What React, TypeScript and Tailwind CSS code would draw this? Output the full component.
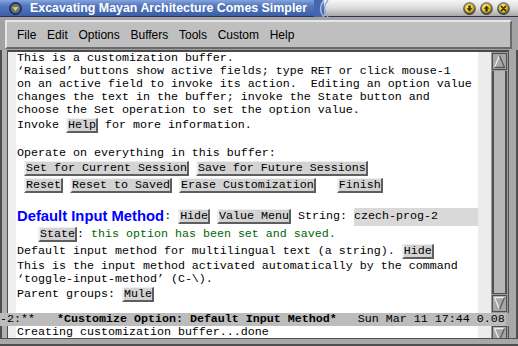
import React from "react";

const MONO = "font-['Liberation_Mono',monospace] text-[11.67px] text-black";

function Btn({ t }: { t: string }) {
  return (
    <span className="inline-flex h-[15px] items-center border-t border-r-2 border-b-2 border-l-2 border-t-[#eeeeee] border-l-[#eeeeee] border-r-[#5e5e5e] border-b-[#5e5e5e] bg-[#d3d3d3] leading-[12px]">
      {t}
    </span>
  );
}

function TitleBtn({ kind }: { kind: "down" | "up" | "close" }) {
  return (
    <svg width="13" height="13" viewBox="0 0 13 13">
      <defs>
        <radialGradient id={"g-" + kind} cx="0.4" cy="0.35" r="0.7">
          <stop offset="0" stopColor="#fff7a0" />
          <stop offset="0.6" stopColor="#e6c41c" />
          <stop offset="1" stopColor="#9c7c00" />
        </radialGradient>
        <linearGradient id={"r-" + kind} x1="0" y1="0" x2="0" y2="1">
          <stop offset="0" stopColor="#8a8a8a" />
          <stop offset="1" stopColor="#3c3c3c" />
        </linearGradient>
      </defs>
      <circle cx="6.5" cy="6.5" r="6.4" fill={"url(#r-" + kind + ")"} />
      <circle cx="6.5" cy="6.5" r="4.7" fill={"url(#g-" + kind + ")"} />
      {kind === "down" && (
        <path d="M5.3 3.6 H7.7 V6.2 H9.4 L6.5 9.4 L3.6 6.2 H5.3 Z" fill="#3b3200" />
      )}
      {kind === "up" && (
        <path d="M5.3 9.4 H7.7 V6.8 H9.4 L6.5 3.6 L3.6 6.8 H5.3 Z" fill="#3b3200" />
      )}
      {kind === "close" && (
        <path d="M4.4 4.4 L8.6 8.6 M8.6 4.4 L4.4 8.6" stroke="#3b3200" strokeWidth="1.6" strokeLinecap="round" />
      )}
    </svg>
  );
}

function ArrowBox({ dir }: { dir: "up" | "down" }) {
  return (
    <div className="h-[17px] w-[15px] bg-[#a6a6a6] border border-[#4e4e4e]">
      <svg width="13" height="15" viewBox="0 0 13 15">
        {dir === "up" ? (
          <>
            <path d="M6.5 1.5 L1.5 13.5" stroke="#ececec" strokeWidth="1.3" fill="none" />
            <path d="M6.5 1.5 L11.5 13.5 L1.5 13.5" stroke="#5a5a5a" strokeWidth="1.3" fill="none" />
          </>
        ) : (
          <>
            <path d="M1.5 1.5 L11.5 1.5 M1.5 1.5 L6.5 13.5" stroke="#ececec" strokeWidth="1.3" fill="none" />
            <path d="M11.5 1.5 L6.5 13.5" stroke="#5a5a5a" strokeWidth="1.3" fill="none" />
          </>
        )}
      </svg>
    </div>
  );
}

function Line({ children }: { children?: React.ReactNode }) {
  return <div className="flex h-[13px] items-center whitespace-pre leading-[13px]">{children}</div>;
}
function BLine({ children }: { children?: React.ReactNode }) {
  return <div className="flex h-[17px] items-center whitespace-pre leading-[13px]">{children}</div>;
}

export default function App() {
  return (
    <div className="flex h-[346px] w-[518px] flex-col overflow-hidden bg-[#a2a2a2]">
      {/* Title bar */}
      <div className="relative flex h-[17px] border-b border-b-[#2a3550]">
        <div className="flex w-[324px] items-center bg-[linear-gradient(to_bottom,#86a3dc,#5479bf_35%,#3b5fa6)] pl-[9px]">
          <svg width="13" height="13" viewBox="0 0 13 13">
            <circle cx="6.5" cy="6.5" r="6.4" fill="#1f2c52" />
            <circle cx="6.5" cy="6.5" r="4.8" fill="#5d6f99" />
            <path d="M3.4 5 H9.6 L6.5 9.2 Z" fill="#f2d42a" stroke="#b89a00" strokeWidth="0.5" />
          </svg>
          <span className="ml-[8px] whitespace-pre font-['Liberation_Sans',sans-serif] text-[12.4px] font-bold leading-[16px] text-white">
            Excavating Mayan Architecture Comes Simpler
          </span>
        </div>
        <div className="flex flex-1 items-center justify-end gap-[4px] bg-[linear-gradient(to_bottom,#f6f6f6,#dcdcdc_50%,#a9a9a9)] pr-[8px]">
          <TitleBtn kind="down" />
          <TitleBtn kind="up" />
          <TitleBtn kind="close" />
        </div>
        <svg className="absolute left-[314px] top-0" width="20" height="17" viewBox="0 0 20 17">
          <path d="M10 0 Q3 8.5 10 17 L0 17 L0 0 Z" fill="#4567ad" />
          <path d="M10 0 Q3 8.5 10 17" stroke="#a9bfe6" strokeWidth="1.4" fill="none" />
          <path d="M14 0 Q7 8.5 14 17" stroke="#8ea8d8" strokeWidth="1.4" fill="none" />
        </svg>
      </div>

      {/* Menu bar */}
      <div className="h-[33px] bg-[#a2a2a2] pb-px pl-[5px] pr-[6px] pt-[3px]">
        <div className="flex h-[29px] items-center gap-[10.7px] border-2 border-t-[#e6e6e6] border-l-[#e6e6e6] border-r-[#6a6a6a] border-b-[#6a6a6a] bg-[#bfbfbf] pl-[10px] font-['Liberation_Sans',sans-serif] text-[12px] text-black">
          <span>File</span>
          <span>Edit</span>
          <span>Options</span>
          <span>Buffers</span>
          <span>Tools</span>
          <span>Custom</span>
          <span>Help</span>
        </div>
      </div>

      {/* Main window */}
      <div className="flex h-[263px]">
        <div className="w-[8px] border-l-2 border-r border-l-[#4e4e4e] border-r-[#4e4e4e] bg-[#b2b2b2]" />
        <div className="flex w-[500px] flex-col border-t-2 border-t-[#4a4a4a]">
          <div className="flex flex-1">
            <div className="w-[8px] bg-[#efefef]" />
            <div className={"w-[462px] bg-white pl-px " + MONO}>
              <Line>This is a customization buffer.</Line>
              <Line>‘Raised’ buttons show active fields; type RET or click mouse-1</Line>
              <Line>on an active field to invoke its action.  Editing an option value</Line>
              <Line>changes the text in the buffer; invoke the State button and</Line>
              <Line>choose the Set operation to set the option value.</Line>
              <BLine>
                <span>Invoke </span>
                <Btn t="Help" />
                <span> for more information.</span>
              </BLine>
              <Line />
              <Line>Operate on everything in this buffer:</Line>
              <BLine>
                <span> </span>
                <Btn t="Set for Current Session" />
                <span> </span>
                <Btn t="Save for Future Sessions" />
              </BLine>
              <BLine>
                <span> </span>
                <Btn t="Reset" />
                <span> </span>
                <Btn t="Reset to Saved" />
                <span> </span>
                <Btn t="Erase Customization" />
                <span>   </span>
                <Btn t="Finish" />
              </BLine>
              <Line />
              <div className="flex h-[19px] items-center whitespace-pre">
                <span className="font-['Liberation_Sans',sans-serif] text-[14.8px] font-bold leading-[19px] text-[#0000ff]">
                  Default Input Method
                </span>
                <span>: </span>
                <Btn t="Hide" />
                <span> </span>
                <Btn t="Value Menu" />
                <span> String: </span>
                <span className="flex h-[18px] flex-1 items-center bg-[#d9d9d9]">czech-prog-2</span>
              </div>
              <BLine>
                <span>   </span>
                <Btn t="State" />
                <span>: </span>
                <span className="text-[#006400]">this option has been set and saved.</span>
              </BLine>
              <BLine>
                <span>Default input method for multilingual text (a string). </span>
                <Btn t="Hide" />
              </BLine>
              <Line>This is the input method activated automatically by the command</Line>
              <Line>‘toggle-input-method’ (C-\).</Line>
              <BLine>
                <span>Parent groups: </span>
                <Btn t="Mule" />
              </BLine>
            </div>
            <div className="w-[13px] bg-[#ececec]" />
            <div className="flex w-[17px] flex-col bg-[#9a9a9a] py-px pl-px pr-px">
              <ArrowBox dir="up" />
              <div className="my-px w-[15px] flex-1 border-l-2 border-r-2 border-l-[#505050] border-r-[#505050] bg-[#b6b6b6] border-b border-b-[#505050]" />
              <ArrowBox dir="down" />
            </div>
          </div>
        </div>
        <div className="w-[10px] border-l border-r-2 border-l-[#4e4e4e] border-r-[#4e4e4e] bg-[#a8a8a8]" />
      </div>

      {/* Mode line */}
      <div className="flex h-[13px]">
        <div className={"flex w-[506px] items-center overflow-hidden whitespace-pre bg-[#bcbcbc] leading-[13px] " + MONO}>
          <span>-2:**</span>
          <span className="ml-[22px] font-bold">*Customize Option: Default Input Method*</span>
          <span>   Sun Mar 11 17:44 0.08</span>
        </div>
        <div className="flex-1 border-r-2 border-r-[#4e4e4e] bg-[#a8a8a8]" />
      </div>

      {/* Minibuffer */}
      <div className="flex h-[12px]">
        <div className="w-[8px] border-l-2 border-r border-l-[#4e4e4e] border-r-[#4e4e4e] bg-[#b2b2b2]" />
        <div className="w-[8px] bg-[#efefef]" />
        <div className={"flex w-[462px] items-center whitespace-pre bg-white pl-px leading-[12px] " + MONO}>
          Creating customization buffer...done
        </div>
        <div className="w-[13px] bg-[#ececec]" />
        <div className="w-[17px] overflow-hidden bg-[#9a9a9a] pl-px">
          <ArrowBox dir="down" />
        </div>
        <div className="w-[10px] border-l border-r-2 border-l-[#4e4e4e] border-r-[#4e4e4e] bg-[#a8a8a8]" />
      </div>

      {/* Bottom frame */}
      <div className="h-[8px] border-t border-b-2 border-t-[#4e4e4e] border-b-[#4e4e4e] bg-[#a8a8a8]" />
    </div>
  );
}
